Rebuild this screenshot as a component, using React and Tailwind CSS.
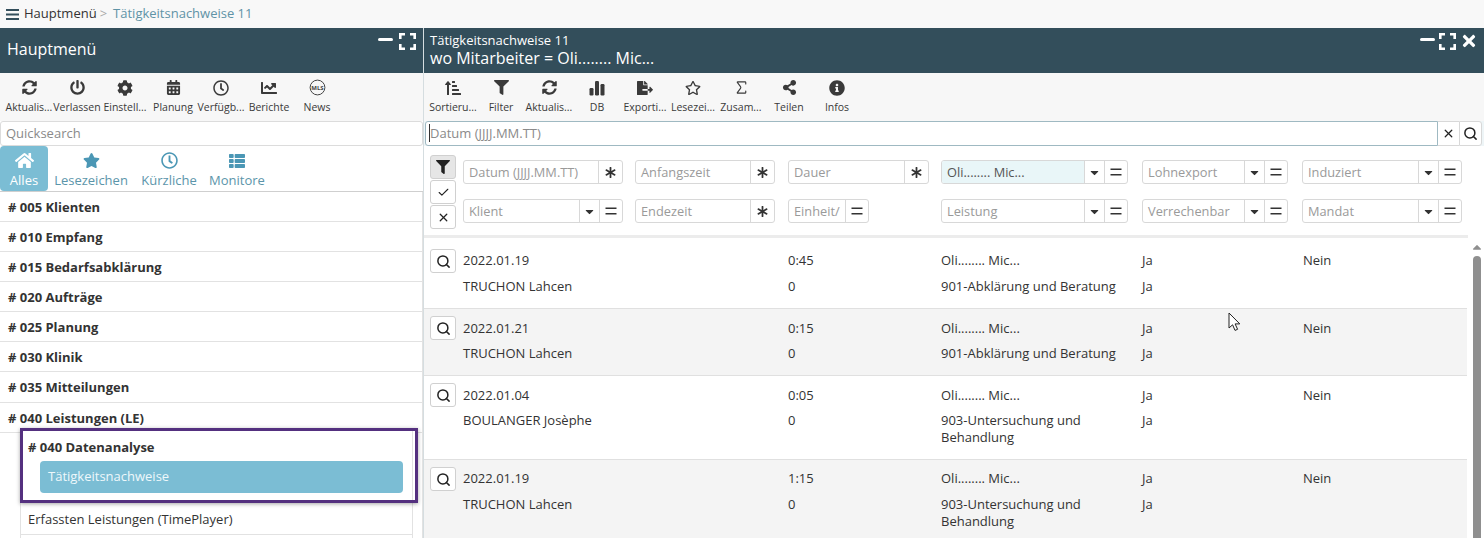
// App.jsx
import React from 'react';
import {
  FaSyncAlt, FaPowerOff, FaCog, FaCalendarAlt, FaRegClock, FaChartLine, FaHome, FaStar, FaThList,
  FaFilter, FaFileExport, FaRegStar, FaShareAlt, FaInfoCircle, FaAsterisk, FaCaretDown,
  FaTimes, FaCaretUp, FaSortAmountUpAlt,
} from 'react-icons/fa';
import { Sigma, Search, Check, X } from 'lucide-react';

const News = () => (
  <svg width="17" height="17" viewBox="0 0 17 17">
    <circle cx="8.5" cy="8.5" r="7.4" fill="none" stroke="#444" strokeWidth="1" />
    <text x="8.5" y="10.6" textAnchor="middle" fontSize="6" fontWeight="700" fill="#444" fontFamily="Open Sans">MLS</text>
  </svg>
);

const Expand = () => (
  <svg width="17" height="17" viewBox="0 0 17 17" fill="none" stroke="#fff" strokeWidth="2.6">
    <path d="M1.3 6V1.3H6M11 1.3h4.7V6M15.7 11v4.7H11M6 15.7H1.3V11" />
  </svg>
);

const Bars = () => (
  <svg width="16" height="16" viewBox="0 0 16 16" fill="currentColor">
    <rect x="0.5" y="8" width="4" height="7.5" rx="1.2" />
    <rect x="6" y="1" width="4" height="14.5" rx="1.2" />
    <rect x="11.5" y="4" width="4" height="11.5" rx="1.2" />
  </svg>
);

const Equals = () => (
  <svg width="12" height="8" viewBox="0 0 12 8" stroke="currentColor" strokeWidth="1.4">
    <path d="M0.5 1.2h11M0.5 6.8h11" />
  </svg>
);

const Hamburger = () => (
  <svg width="13" height="11" viewBox="0 0 13 11" stroke="#334e5b" strokeWidth="2">
    <path d="M0 1h13M0 5.5h13M0 10h13" />
  </svg>
);

const Minimize = () => <div className="w-[15px] h-[3px] bg-white rounded-sm mt-[-3px]" />;

const leftTools = [
  { icon: <FaSyncAlt size={15} />, label: 'Aktualis...' },
  { icon: <FaPowerOff size={15} />, label: 'Verlassen' },
  { icon: <FaCog size={16} />, label: 'Einstell...' },
  { icon: <FaCalendarAlt size={15} />, label: 'Planung' },
  { icon: <FaRegClock size={16} />, label: 'Verfügb...' },
  { icon: <FaChartLine size={16} />, label: 'Berichte' },
  { icon: <News />, label: 'News' },
];

const rightTools = [
  { icon: <FaSortAmountUpAlt size={16} />, label: 'Sortieru...' },
  { icon: <FaFilter size={15} />, label: 'Filter' },
  { icon: <FaSyncAlt size={15} />, label: 'Aktualis...' },
  { icon: <Bars />, label: 'DB' },
  { icon: <FaFileExport size={16} />, label: 'Exporti...' },
  { icon: <FaRegStar size={16} />, label: 'Lesezei...' },
  { icon: <Sigma size={17} strokeWidth={1.6} />, label: 'Zusam...' },
  { icon: <FaShareAlt size={15} />, label: 'Teilen' },
  { icon: <FaInfoCircle size={16} />, label: 'Infos' },
];

const tabs = [
  { icon: <FaStar size={17} />, label: 'Lesezeichen', w: 'w-[82px]' },
  { icon: <FaRegClock size={17} />, label: 'Kürzliche', w: 'w-[70px]' },
  { icon: <FaThList size={16} />, label: 'Monitore', w: 'w-[62px]' },
];

const menu = [
  '# 005 Klienten', '# 010 Empfang', '# 015 Bedarfsabklärung', '# 020 Aufträge',
  '# 025 Planung', '# 030 Klinik', '# 035 Mitteilungen', '# 040 Leistungen (LE)',
];

const rows = [
  { date: '2022.01.19', client: 'TRUCHON Lahcen', time: '0:45', service: '901-Abklärung und Beratung', h: 'h-[71px] pt-[11px]', g: 'pt-[3px] gap-y-[9px]' },
  { date: '2022.01.21', client: 'TRUCHON Lahcen', time: '0:15', service: '901-Abklärung und Beratung', h: 'h-[67px] pt-[7px]', g: 'pt-[4px] gap-y-[8px]', alt: true },
  { date: '2022.01.04', client: 'BOULANGER Josèphe', time: '0:05', service: '903-Untersuchung und Behandlung', h: 'h-[84px] pt-[7px]', g: 'pt-[4px] gap-y-[8px]' },
  { date: '2022.01.19', client: 'TRUCHON Lahcen', time: '1:15', service: '903-Untersuchung und Behandlung', h: 'h-[84px] pt-[7px]', g: 'pt-[3px] gap-y-[9px]', alt: true },
];

const Toolbar = ({ items, className }) => (
  <div className={`h-[48px] bg-[#f7f7f7] flex items-start pt-[5px] ${className}`}>
    {items.map((t) => (
      <div key={t.label} className="w-[48px] flex flex-col items-center text-[#3a3a3a]">
        <div className="h-[19px] flex items-center">{t.icon}</div>
        <span className="text-[10.5px] leading-[14px] mt-[3px] whitespace-nowrap">{t.label}</span>
      </div>
    ))}
  </div>
);

// one filter input with its little addon buttons
const Field = ({ label, w, kind, active }) => (
  <div className={`${w} h-[24px] flex border border-[#d8d8d8] rounded-[3px] bg-white overflow-hidden`}>
    <div className={`flex-1 min-w-0 px-[5px] text-[12.8px] leading-[23px] whitespace-nowrap overflow-hidden ${active ? 'bg-[#e9f6f8] text-[#555]' : 'text-[#9a9a9a]'}`}>{label}</div>
    {kind === 'star' && (
      <div className="w-[24px] border-l border-[#d8d8d8] flex items-center justify-center text-[#333]"><FaAsterisk size={11} /></div>
    )}
    {kind === 'caret' && (
      <div className="w-[20px] border-l border-[#d8d8d8] flex items-center justify-center text-[#333]"><FaCaretDown size={13} /></div>
    )}
    {(kind === 'caret' || kind === 'eq') && (
      <div className="w-[23px] border-l border-[#d8d8d8] flex items-center justify-center text-[#333]"><Equals /></div>
    )}
  </div>
);

const SideButton = ({ children, pressed }) => (
  <div className={`w-[26px] h-[24px] mb-[1px] border border-[#d0d0d0] rounded-[3px] flex items-center justify-center text-[#222] ${pressed ? 'bg-[#e6e6e6]' : 'bg-white'}`}>
    {children}
  </div>
);

const App = () => {
  return (
    <div className="relative w-[1484px] h-[538px] overflow-hidden bg-white text-[#333]" style={{ fontFamily: '"Open Sans", sans-serif' }}>
      <div className="h-[28px] bg-[#f8f8f8] flex items-center pl-[6px] text-[13px]">
        <Hamburger />
        <span className="ml-[5px] text-[#333]">Hauptmenü</span>
        <span className="ml-[3px] mr-[6px] text-[#aaa]">&gt;</span>
        <span className="text-[#5f93a6]">Tätigkeitsnachweise 11</span>
      </div>

      <div className="flex h-[510px]">
        {/* left panel */}
        <div className="w-[423px] flex flex-col">
          <div className="h-[45px] bg-[#334e5b] flex justify-between pl-[7px] pr-[7px] text-white">
            <span className="text-[16px] leading-[43px]">Hauptmenü</span>
            <div className="flex items-center gap-[6px] h-[26px]"><Minimize /><Expand /></div>
          </div>
          <Toolbar items={leftTools} className="pl-[5px]" />
          <div className="h-[25px] border border-[#dcdcdc] rounded-[3px] px-[5px] text-[13px] leading-[23px] text-[#8a8a8a] bg-white">Quicksearch</div>
          <div className="h-[46px] flex border-b border-[#cfcfcf]">
            <div className="w-[48px] bg-[#7bbdd4] rounded-[4px] flex flex-col items-center pt-[5px] text-white">
              <FaHome size={19} />
              <span className="text-[13px] leading-[18px] mt-[1px]">Alles</span>
            </div>
            {tabs.map((t) => (
              <div key={t.label} className={`${t.w} ml-[2px] flex flex-col items-center pt-[5px] text-[#4b97b5]`}>
                <div className="h-[19px] flex items-center">{t.icon}</div>
                <span className="text-[13px] leading-[18px] mt-[1px] text-[#5b95aa] whitespace-nowrap">{t.label}</span>
              </div>
            ))}
          </div>
          <div className="flex-1 border-r border-[#e2e2e2] overflow-hidden">
            {menu.map((m) => (
              <div key={m} className="h-[30.09px] border-b border-[#e2e2e2] pl-[8px] text-[13px] font-bold leading-[30px] text-[#333]">{m}</div>
            ))}
            <div className="ml-[20px] mr-[10px] -mt-[5px]">
              <div className="relative z-10 w-[398px] h-[75px] border-[3px] border-[#54307f] shadow-[0_1px_4px_rgba(0,0,0,0.35)] bg-white">
                <div className="w-[390px] h-full border-r border-[#e2e2e2] pl-[5px]">
                  <div className="h-[30px] text-[13px] font-bold leading-[32px] text-[#333]">{'# 040 Datenanalyse'}</div>
                  <div className="ml-[12px] w-[363px] h-[32px] rounded-[4px] bg-[#7bbdd4] pl-[8px] text-[13px] leading-[30px] text-[#eef8fb]">Tätigkeitsnachweise</div>
                </div>
              </div>
              <div className="w-[393px] border-x border-[#e2e2e2]">
                <div className="h-[32px] border-b border-[#e2e2e2] pl-[7px] text-[13px] leading-[32px]">Erfassten Leistungen (TimePlayer)</div>
                <div className="h-[10px]" />
              </div>
            </div>
          </div>
        </div>

        <div className="w-[1px] bg-[#d5dde0]" />

        {/* right panel */}
        <div className="flex-1 min-w-0 flex flex-col">
          <div className="h-[45px] bg-[#334e5b] flex justify-between pl-[6px] pr-[6px] text-white">
            <div className="pt-[4px]">
              <div className="text-[13px] leading-[16px]">Tätigkeitsnachweise 11</div>
              <div className="text-[16px] leading-[20px]">wo Mitarbeiter = Oli........ Mic...</div>
            </div>
            <div className="flex items-center gap-[4px] h-[26px]"><Minimize /><Expand /><FaTimes size={18} /></div>
          </div>
          <Toolbar items={rightTools} className="pl-[5px]" />

          <div className="h-[25px] flex bg-[#eef5f7]">
            <div className="w-[1013px] ml-[1px] border border-[#9fb9c2] rounded-l-[3px] bg-white pl-[3px] text-[13px] leading-[23px] text-[#8a8a8a]">
              <span className="border-l border-[#333]">Datum (JJJJ.MM.TT)</span>
            </div>
            <div className="w-[21px] border-y border-[#d8d8d8] flex items-center justify-center bg-white text-[#222]"><X size={13} strokeWidth={2.4} /></div>
            <div className="w-[23px] border border-[#d8d8d8] rounded-r-[3px] flex items-center justify-center bg-white text-[#222]"><Search size={15} strokeWidth={2.4} /></div>
          </div>

          <div className="h-[92px] w-[1044px] flex bg-white border-b-[3px] border-[#ececec] pt-[9px] pl-[6px]">
            <div className="w-[33px] shrink-0 flex flex-col">
              <SideButton pressed><FaFilter size={14} /></SideButton>
              <SideButton><Check size={13} strokeWidth={2} /></SideButton>
              <SideButton><X size={13} strokeWidth={2.4} /></SideButton>
            </div>
            <div className="grid grid-cols-[172px_153px_153px_201px_160px_160px] grid-rows-[24px_24px] gap-y-[15px] pt-[5px]">
              <Field label="Datum (JJJJ.MM.TT)" w="w-[160px]" kind="star" />
              <Field label="Anfangszeit" w="w-[140px]" kind="star" />
              <Field label="Dauer" w="w-[141px]" kind="star" />
              <Field label="Oli........ Mic..." w="w-[187px]" kind="caret" active />
              <Field label="Lohnexport" w="w-[146px]" kind="caret" />
              <Field label="Induziert" w="w-[160px]" kind="caret" />
              <Field label="Klient" w="w-[160px]" kind="caret" />
              <Field label="Endezeit" w="w-[140px]" kind="star" />
              <Field label="Einheit/" w="w-[81px]" kind="eq" />
              <Field label="Leistung" w="w-[187px]" kind="caret" />
              <Field label="Verrechenbar" w="w-[146px]" kind="caret" />
              <Field label="Mandat" w="w-[160px]" kind="caret" />
            </div>
          </div>

          <div className="flex-1 flex min-h-0">
            <div className="w-[1044px] overflow-hidden">
              {rows.map((r) => (
                <div key={r.date + r.time} className={`${r.h} flex border-b border-[#e0e0e0] pl-[6px] text-[13px] leading-[17px] ${r.alt ? 'bg-[#f4f4f4]' : 'bg-white'}`}>
                  <div className="w-[33px] shrink-0">
                    <div className="w-[26px] h-[24px] border border-[#d0d0d0] rounded-[3px] bg-white flex items-center justify-center text-[#222]"><Search size={15} strokeWidth={2.4} /></div>
                  </div>
                  <div className={`grid grid-cols-[325px_153px_201px_161px_1fr] auto-rows-min ${r.g}`}>
                    <div>{r.date}</div>
                    <div>{r.time}</div>
                    <div>Oli........ Mic...</div>
                    <div>Ja</div>
                    <div>Nein</div>
                    <div>{r.client}</div>
                    <div>0</div>
                    <div className="w-[190px]">{r.service}</div>
                    <div>Ja</div>
                  </div>
                </div>
              ))}
            </div>
            <div className="flex-1 flex flex-col items-center pl-[3px] pt-[2px]">
              <FaCaretUp size={14} className="text-[#8f8f8f]" />
              <div className="w-[8px] flex-1 mt-[2px] rounded-t-[4px] bg-[#8f8f8f]" />
            </div>
          </div>
        </div>
      </div>

      {/* mouse pointer */}
      <svg className="absolute left-[1228px] top-[312px]" width="14" height="21" viewBox="0 0 14 21">
        <path d="M1 1v15l3.6-3.2 2.4 5.6 2.6-1.1-2.5-5.4h4.7z" fill="#fff" stroke="#222" strokeWidth="1" />
      </svg>
    </div>
  );
};

export default App;
